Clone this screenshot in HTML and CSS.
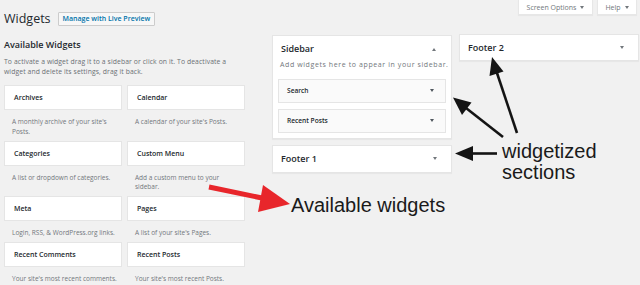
FILE: index.html
```html
<!DOCTYPE html>
<html lang="en">
<head>
<meta charset="utf-8">
<title>Widgets</title>
<link rel="stylesheet" href="styles.css">
</head>
<body>
<div class="screen">
  <div class="top">
    <div class="page-head">
      <h1 class="page-title">Widgets</h1>
      <a class="btn" href="#">Manage with Live Preview</a>
    </div>
    <div class="tabs">
      <div class="tab tab-screen">Screen Options <span class="caret"></span></div>
      <div class="tab tab-help">Help <span class="caret"></span></div>
    </div>
  </div>

  <div class="main">
    <section class="available">
      <h2>Available Widgets</h2>
      <p class="intro">To activate a widget drag it to a sidebar or click on it. To deactivate a widget and delete its settings, drag it back.</p>
      <div class="widget-grid">
        <div class="widget"><div class="widget-title">Archives</div><div class="widget-desc">A monthly archive of your site's Posts.</div></div>
        <div class="widget"><div class="widget-title">Calendar</div><div class="widget-desc">A calendar of your site's Posts.</div></div>
        <div class="widget"><div class="widget-title">Categories</div><div class="widget-desc">A list or dropdown of categories.</div></div>
        <div class="widget"><div class="widget-title">Custom Menu</div><div class="widget-desc">Add a custom menu to your sidebar.</div></div>
        <div class="widget"><div class="widget-title">Meta</div><div class="widget-desc">Login, RSS, &amp; WordPress.org links.</div></div>
        <div class="widget"><div class="widget-title">Pages</div><div class="widget-desc">A list of your site's Pages.</div></div>
        <div class="widget"><div class="widget-title">Recent Comments</div><div class="widget-desc">Your site's most recent comments.</div></div>
        <div class="widget"><div class="widget-title">Recent Posts</div><div class="widget-desc">Your site's most recent Posts.</div></div>
      </div>
    </section>

    <section class="area-col area-col-1">
      <div class="area sidebar-area">
        <div class="area-head">
          <h3 class="area-name">Sidebar</h3>
          <span class="caret caret-up"></span>
        </div>
        <p class="area-desc">Add widgets here to appear in your sidebar.</p>
        <div class="area-widget"><span>Search</span><span class="caret"></span></div>
        <div class="area-widget"><span>Recent Posts</span><span class="caret"></span></div>
      </div>
      <div class="area area-closed">
        <h3 class="area-name">Footer 1</h3>
        <span class="caret"></span>
      </div>
    </section>

    <section class="area-col area-col-2">
      <div class="area area-closed footer-2">
        <h3 class="area-name">Footer 2</h3>
        <span class="caret"></span>
      </div>
    </section>
  </div>

  <svg class="annotations" width="640" height="285" viewBox="0 0 640 285" aria-hidden="true">
    <g stroke="#141414" stroke-width="2.6" fill="none" stroke-linecap="butt">
      <line x1="517" y1="133" x2="496" y2="70"/>
      <line x1="503" y1="137" x2="466" y2="108"/>
      <line x1="497" y1="153.5" x2="470" y2="153.5"/>
    </g>
    <g fill="#141414">
      <polygon points="492,57 503.5,71.5 489.5,76"/>
      <polygon points="453,97.5 471.5,102.5 462,115"/>
      <polygon points="455,153.5 473,146 473,161"/>
    </g>
    <line x1="209" y1="187" x2="262" y2="198" stroke="#e8262b" stroke-width="5"/>
    <polygon points="290,204 263,185 258,212" fill="#e8262b"/>
  </svg>
  <div class="label label-sections">widgetized<br>sections</div>
  <div class="label label-available">Available widgets</div>
</div>
</body>
</html>
```

FILE: styles.css
```css
* {
  box-sizing: border-box;
}

body {
  margin: 0;
  background: #f1f1f1;
  font-family: "Open Sans", "Noto Sans", sans-serif;
  color: #23282d;
}

.screen {
  position: relative;
  width: 640px;
  height: 285px;
  overflow: hidden;
}

/* ---------- top bar ---------- */
.top {
  display: flex;
  justify-content: space-between;
  align-items: flex-start;
  padding: 0 3px 0 4px;
}

.page-head {
  display: flex;
  align-items: center;
  gap: 7px;
  height: 18px;
  margin-top: 10px;
}

.page-title {
  margin: 0;
  font-size: 12.5px;
  font-weight: 400;
  line-height: 18px;
  color: #23282d;
}

.btn {
  display: block;
  height: 14px;
  padding: 0 4px;
  font-size: 7px;
  font-weight: 600;
  line-height: 12px;
  color: #0073aa;
  background: #f7f7f7;
  border: 1px solid #cccccc;
  border-radius: 1px;
  text-decoration: none;
}

.tabs {
  display: flex;
  gap: 4px;
}

.tab {
  display: flex;
  align-items: center;
  justify-content: center;
  gap: 4px;
  height: 15px;
  font-size: 7px;
  color: #72777c;
  background: #ffffff;
  border: 1px solid #e7e7e7;
  border-top: 0;
  box-shadow: 0 1px 1px rgba(0, 0, 0, 0.04);
}

.tab-screen {
  width: 75px;
}

.tab-help {
  width: 40px;
}

.caret {
  display: inline-block;
  width: 0;
  height: 0;
  border-left: 2.5px solid transparent;
  border-right: 2.5px solid transparent;
  border-top: 3px solid #72777c;
}

.caret-up {
  border-top: 0;
  border-bottom: 3px solid #72777c;
}

/* ---------- main ---------- */
.main {
  display: flex;
  align-items: flex-start;
  margin-top: 6px;
  padding-left: 4px;
}

.available {
  width: 241px;
  padding-top: 5px;
}

.available h2 {
  margin: 0;
  font-size: 9px;
  font-weight: 600;
  line-height: 12px;
}

.intro {
  margin: 5.5px 0 7.5px;
  font-size: 6.8px;
  letter-spacing: 0.1px;
  line-height: 10.5px;
  color: #6b7075;
}

.widget-grid {
  display: grid;
  grid-template-columns: 118px 118px;
  column-gap: 5px;
}

.widget-title {
  display: flex;
  align-items: center;
  height: 25px;
  padding-left: 9px;
  font-size: 7px;
  font-weight: 600;
  background: #ffffff;
  border: 1px solid #e5e5e5;
}

.widget-desc {
  padding: 7px 3px 4.5px 8px;
  font-size: 6.5px;
  line-height: 9.5px;
  color: #72777c;
}

/* ---------- widget areas ---------- */
.area-col {
  width: 180px;
  display: flex;
  flex-direction: column;
  gap: 6px;
}

.area-col-1 {
  margin-left: 27px;
  margin-top: 1px;
}

.area-col-2 {
  margin-left: 7px;
}

.area {
  background: #ffffff;
  border: 1px solid #e5e5e5;
  box-shadow: 0 1px 1px rgba(0, 0, 0, 0.04);
}

.sidebar-area {
  padding: 0 5px 5px;
}

.area-head {
  display: flex;
  justify-content: space-between;
  align-items: center;
  padding: 7px 10px 0 3px;
}

.area-name {
  margin: 0;
  font-size: 9px;
  font-weight: 600;
  line-height: 12px;
}

.area-desc {
  margin: 4.5px 0 9.5px 2px;
  font-size: 7px;
  letter-spacing: 0.6px;
  line-height: 9.5px;
  color: #72777c;
  white-space: nowrap;
}

.area-widget {
  display: flex;
  justify-content: space-between;
  align-items: center;
  height: 24px;
  padding: 0 11px 0 8px;
  font-size: 6.6px;
  font-weight: 600;
  background: #fafafa;
  border: 1px solid #e5e5e5;
}

.area-widget + .area-widget {
  margin-top: 6px;
}

.area-widget .caret {
  border-top-color: #50575e;
}

.area-closed {
  display: flex;
  justify-content: space-between;
  align-items: center;
  height: 28px;
  padding: 0 14px 0 8px;
}

.footer-2 {
  height: 27px;
  padding-left: 8px;
}

/* ---------- annotations ---------- */
.annotations {
  position: absolute;
  left: 0;
  top: 0;
  pointer-events: none;
}

.label {
  position: absolute;
  font-family: "Liberation Sans", Arial, sans-serif;
  font-size: 20px;
  line-height: 21px;
  color: #1a1a1a;
  white-space: nowrap;
}

.label-sections {
  left: 502px;
  top: 141px;
}

.label-available {
  left: 291px;
  top: 194.5px;
}
```
